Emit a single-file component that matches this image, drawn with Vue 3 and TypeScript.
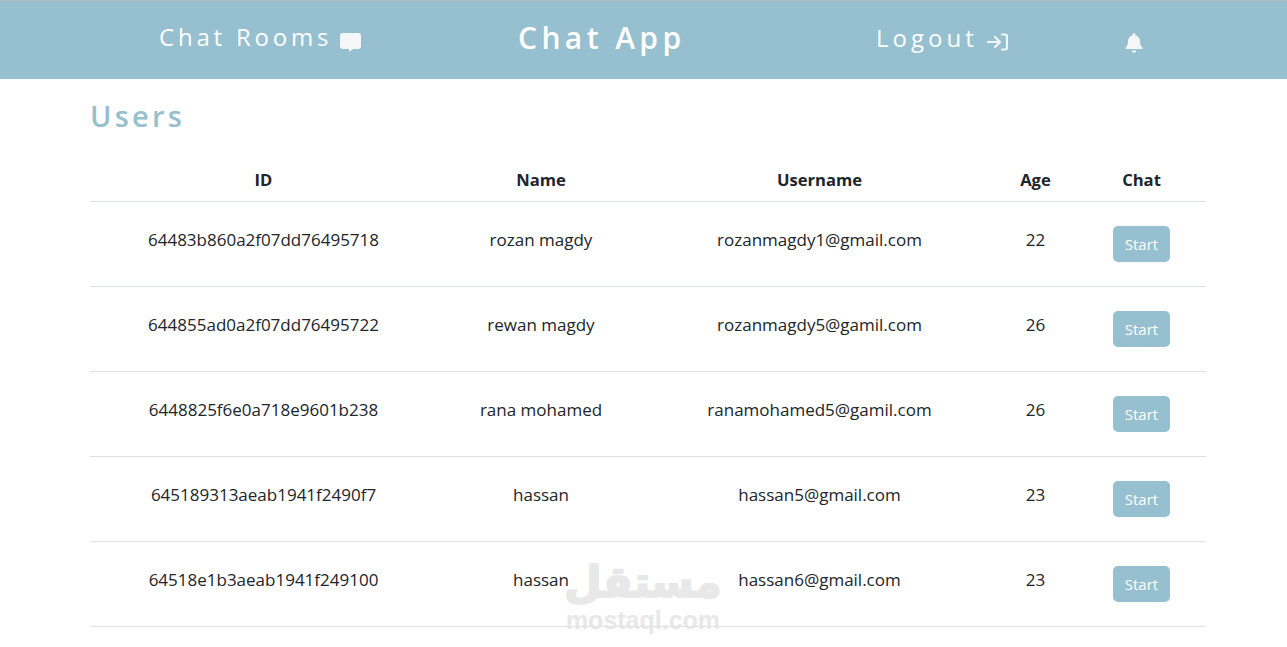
<script setup lang="ts">
interface User {
  id: string
  name: string
  username: string
  age: number
}

const users: User[] = [
  { id: '64483b860a2f07dd76495718', name: 'rozan magdy', username: 'rozanmagdy1@gmail.com', age: 22 },
  { id: '644855ad0a2f07dd76495722', name: 'rewan magdy', username: 'rozanmagdy5@gamil.com', age: 26 },
  { id: '6448825f6e0a718e9601b238', name: 'rana mohamed', username: 'ranamohamed5@gamil.com', age: 26 },
  { id: '645189313aeab1941f2490f7', name: 'hassan', username: 'hassan5@gmail.com', age: 23 },
  { id: '64518e1b3aeab1941f249100', name: 'hassan', username: 'hassan6@gmail.com', age: 23 },
]
</script>

<template>
  <div class="page">
    <header class="navbar">
      <a class="nav-link rooms">
        Chat Rooms
        <svg class="icon" width="21" height="20" viewBox="0 0 21 20">
          <path d="M3 1h15a3 3 0 0 1 3 3v10a3 3 0 0 1-3 3h-5l-4 3v-3H3a3 3 0 0 1-3-3V4a3 3 0 0 1 3-3z" fill="#f4f6f7" />
        </svg>
      </a>
      <span class="brand">Chat App</span>
      <a class="nav-link logout">
        Logout
        <svg class="icon" width="21" height="18" viewBox="0 0 21 18" fill="none" stroke="#f4f6f7" stroke-width="2.200" stroke-linecap="round" stroke-linejoin="round">
          <path d="M1 9h12M8 4 13 9 8 14" />
          <path d="M15 1.500h3a2 2 0 0 1 2 2v11a2 2 0 0 1-2 2h-3" />
        </svg>
      </a>
      <svg class="bell" width="18" height="20" viewBox="0 0 18 20">
        <path d="M9 0a1.300 1.300 0 0 1 1.300 1.300v.9c3 .6 4.700 3.100 4.700 6 0 3.500 1 5 2.500 6.400.5.600.2 1.400-.6 1.400H1.100c-.8 0-1.100-.8-.6-1.400C2 13.200 3 11.700 3 8.200c0-2.900 1.700-5.400 4.700-6v-.9A1.300 1.300 0 0 1 9 0z" fill="#f4f6f7" />
        <path d="M6.700 17.500h4.600a2.300 2.300 0 0 1-4.600 0z" fill="#f4f6f7" />
      </svg>
    </header>

    <main class="content">
      <h1 class="title">Users</h1>
      <table class="users">
        <thead>
          <tr>
            <th class="col-id">ID</th>
            <th class="col-name">Name</th>
            <th class="col-user">Username</th>
            <th class="col-age">Age</th>
            <th class="col-chat">Chat</th>
          </tr>
        </thead>
        <tbody>
          <tr v-for="user in users" :key="user.id">
            <td>{{ user.id }}</td>
            <td>{{ user.name }}</td>
            <td>{{ user.username }}</td>
            <td>{{ user.age }}</td>
            <td><button class="start">Start</button></td>
          </tr>
        </tbody>
      </table>
    </main>

    <div class="watermark">
      <div class="wm-ar" dir="rtl">مستقل</div>
      <div class="wm-en">mostaql.com</div>
    </div>
  </div>
</template>

<style>
html,
body {
  margin: 0;
  background: #fff;
}
</style>

<style scoped>
.page {
  position: relative;
  height: 647px;
  overflow: hidden;
  font-family: "Open Sans", "Noto Sans", sans-serif;
  color: #212529;
}

.navbar {
  display: flex;
  align-items: center;
  height: 78px;
  padding-left: 159px;
  background: #96bfcf;
  border-top: 1px solid #b4b8bc;
  color: #fff;
}

.nav-link {
  display: flex;
  align-items: center;
  font-size: 24px;
  font-weight: 400;
  letter-spacing: 4px;
  white-space: nowrap;
}

.rooms {
  width: 359px;
  gap: 8px;
  margin-top: -8px;
  letter-spacing: 3.8px;
}

.rooms .icon {
  margin-top: 12px;
}

.brand {
  width: 358px;
  margin-top: -6px;
  font-size: 30px;
  font-weight: 600;
  letter-spacing: 4.4px;
}

.logout {
  width: 249px;
  gap: 9px;
  margin-top: -5px;
}

.logout .icon {
  margin-top: 8px;
}

.bell {
  margin-top: 6px;
}

.content {
  width: 1116px;
  margin-left: 90px;
}

.title {
  margin: 17px 0 0;
  font-size: 29px;
  line-height: 40px;
  font-weight: 600;
  letter-spacing: 3.2px;
  color: #96bfcf;
}

.users {
  width: 100%;
  margin-top: 21px;
  border-collapse: collapse;
  table-layout: fixed;
  font-size: 17px;
}

.users th {
  height: 44px;
  padding: 0;
  font-size: 16.6px;
  font-weight: 700;
  border-bottom: 1px solid #dee2e6;
}

.users td {
  height: 74px;
  padding: 0 0 10px;
  text-align: center;
  border-bottom: 1px solid #dee2e6;
}

.col-id { width: 347px; }
.col-name { width: 208px; }
.col-user { width: 349px; }
.col-age { width: 83px; }
.col-chat { width: 129px; }

.start {
  display: block;
  width: 57px;
  height: 36px;
  margin: 10px auto 0;
  padding: 0;
  border: 0;
  border-radius: 5px;
  background: #96bfcf;
  color: #fff;
  font-family: inherit;
  font-size: 15px;
}

.watermark {
  position: absolute;
  left: 555px;
  top: 554px;
  width: 176px;
  text-align: center;
  color: #e4e4e4;
  opacity: 0.85;
  pointer-events: none;
}

.wm-ar {
  font-family: "DejaVu Sans", sans-serif;
  font-size: 43px;
  line-height: 56px;
  font-weight: 700;
  -webkit-text-stroke: 2px #e4e4e4;
}

.wm-en {
  margin-top: -2px;
  font-family: "Liberation Sans", sans-serif;
  font-size: 25px;
  line-height: 24px;
  font-weight: 700;
}
</style>
